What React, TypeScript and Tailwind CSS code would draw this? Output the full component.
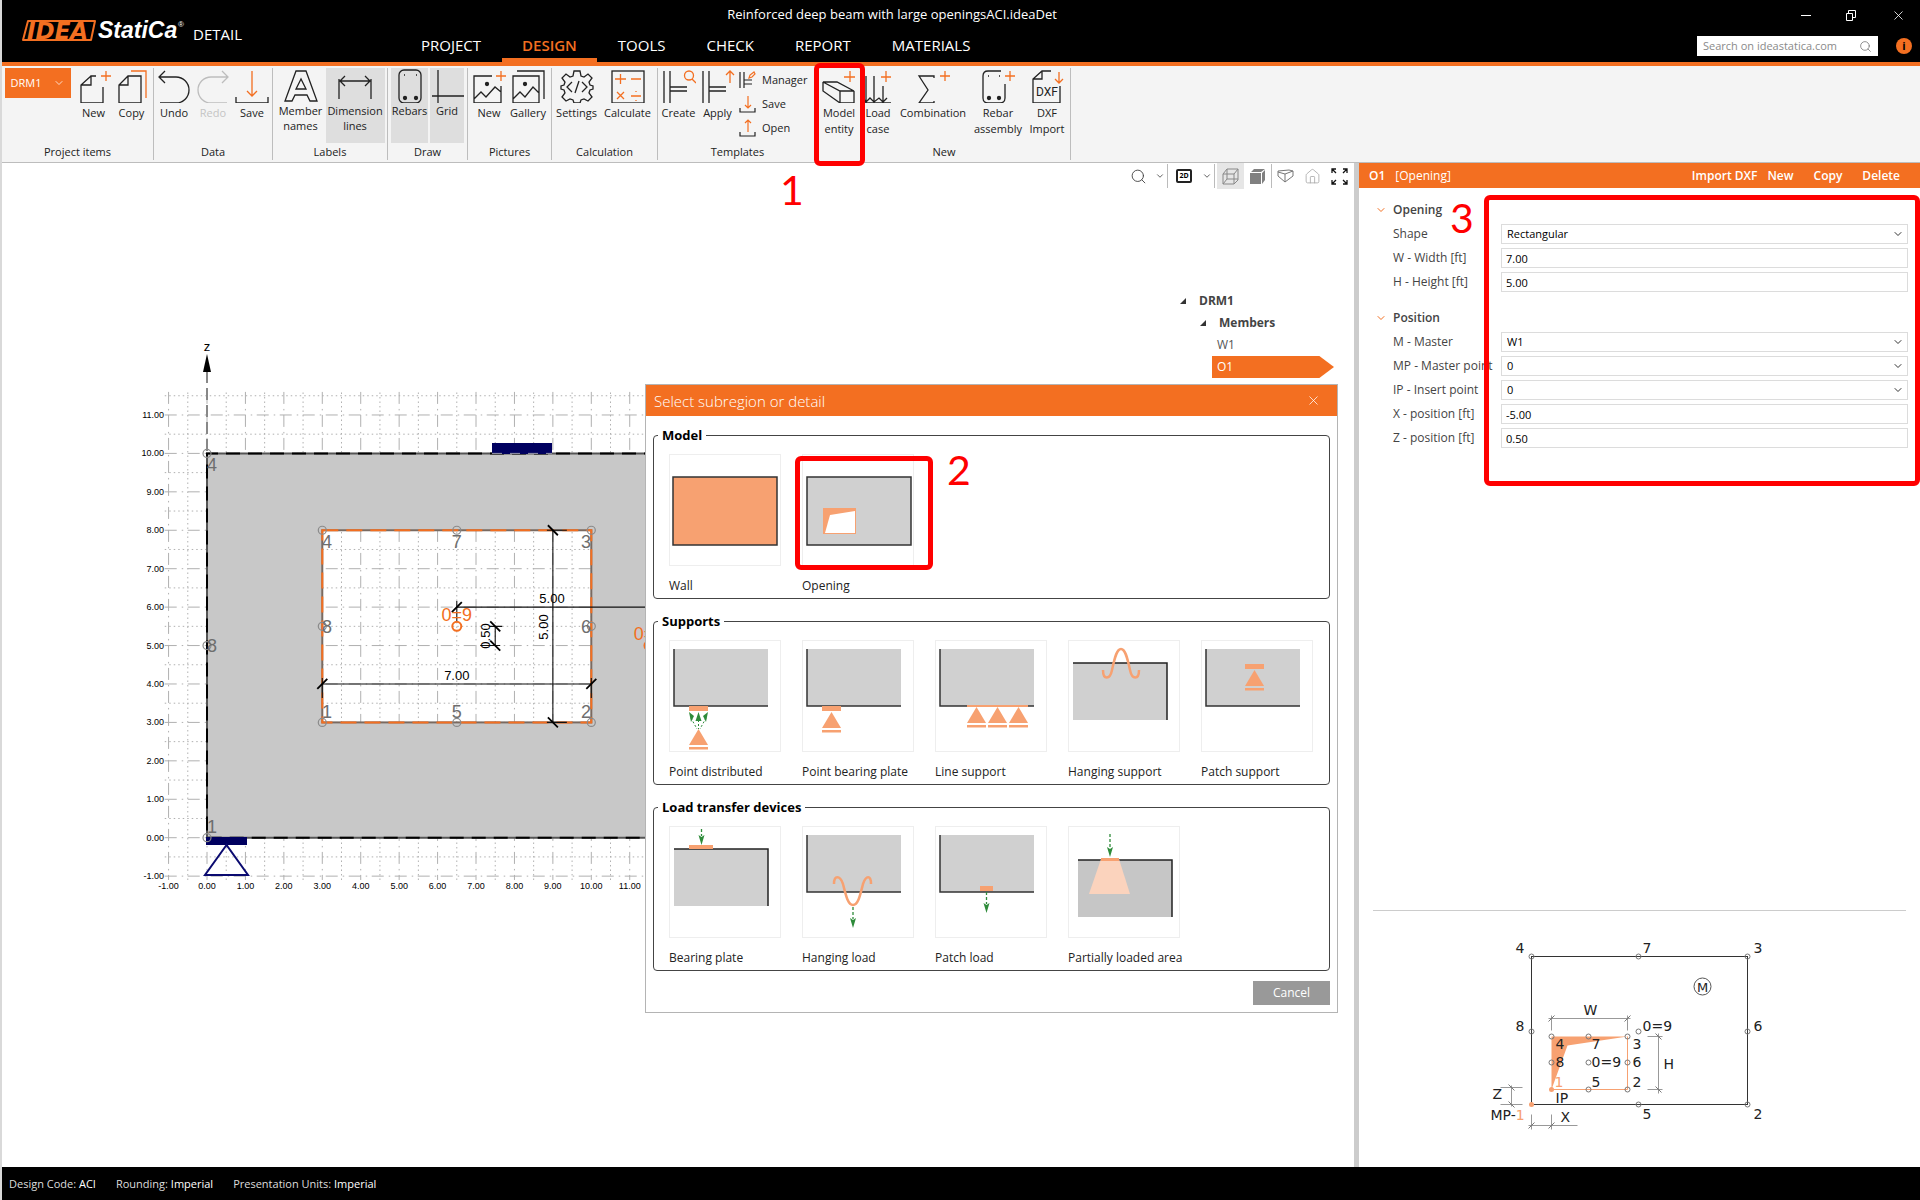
import type { ReactNode } from "react";
import { ChevronDown, Home, Search, X } from "lucide-react";

const ORANGE = "#f36f21";
const PEACH = "#f7a171";
const INK = "#222222";
const GREEN = "#2e8b3a";

/* ---------- ribbon icons ---------- */

const Icon = ({ children, faded }: { children: ReactNode; faded?: boolean }) => (
  <svg width="34" height="34" viewBox="0 0 34 34" fill="none" stroke={faded ? "#bdbdbd" : INK} strokeWidth="1.3">
    {children}
  </svg>
);

const Plus = () => <path d="M24 7h10M29 2v10" stroke={ORANGE} />;

const NewIcon = () => (
  <Icon>
    <path d="M14 7 4 16v18h22V18M19 7h-5v9H4" />
    <Plus />
  </Icon>
);
const CopyIcon = () => (
  <Icon>
    <path d="M13 7h13v27H4V16zM13 7v9H4" />
    <path d="M16 2h15v27" stroke={ORANGE} />
  </Icon>
);
const UndoIcon = () => (
  <Icon>
    <path d="M2 8h17a13 13 0 0 1 0 26H3M8 2 2 8l6 6" />
  </Icon>
);
const RedoIcon = () => (
  <Icon faded>
    <path d="M32 8H15a13 13 0 0 0 0 26h16M26 2l6 6-6 6" />
  </Icon>
);
const SaveIcon = () => (
  <Icon>
    <path d="M17 2v25M12 22l5 5 5-5" stroke={ORANGE} />
    <path d="M1 28v6h32v-6" />
  </Icon>
);
const MemberIcon = () => (
  <Icon>
    <path d="M12 2h10l11 30h-7l-3-6H11l-3 6H1zM17 10l-5 10h10z" />
  </Icon>
);
const DimensionIcon = () => (
  <Icon>
    <path d="M1 10v20M33 10v20M2 12h30M7 7l-5 5 5 5M27 7l5 5-5 5" />
  </Icon>
);
const RebarsIcon = () => (
  <Icon>
    <rect x="6" y="1" width="22" height="33" rx="5" />
    <circle cx="12" cy="29" r="1.5" fill={INK} />
    <circle cx="23" cy="29" r="1.5" fill={INK} />
    <path d="M11 6h1M23 6h1" />
  </Icon>
);
const GridIcon = () => (
  <Icon>
    <path d="M8 1v33M2 27h32" />
  </Icon>
);
const PictureNewIcon = () => (
  <Icon>
    <path d="M20 7H2v27h27V17M2 30l7-7 5 5 9-10 6 5" />
    <circle cx="15" cy="15" r="1.5" fill={INK} />
    <Plus />
  </Icon>
);
const GalleryIcon = () => (
  <Icon>
    <path d="M2 7h26v27H2zM2 30l7-7 5 5 8-10 6 6M6 2h27v28" />
    <circle cx="14" cy="15" r="1.5" fill={INK} />
  </Icon>
);
const SettingsIcon = () => (
  <Icon>
    <path d="M14 2h6l1 5 3 1 4-3 4 4-3 4 1 3 3 1v3l-3 1-1 3 3 4-4 4-4-2-3 1-1 3h-6l-1-3-3-1-4 2-4-4 3-4-1-3-3-1v-3l3-1 1-3-3-4 4-4 4 3 3-1z" />
    <path d="m12 13-5 5 5 5M22 13l5 5-5 5M19 12l-4 12" />
  </Icon>
);
const CalculateIcon = () => (
  <Icon>
    <rect x="1" y="2" width="32" height="32" />
    <path d="M4 10h11M9.5 5v10M20 10h10M6 23l7 7M13 23l-7 7M20 27h10M25 22v1M25 31v1" stroke={ORANGE} />
  </Icon>
);
const Frame = () => <path d="M2 2v32M8 2v32M8 18h17M8 22h17" />;
const CreateIcon = () => (
  <Icon>
    <Frame />
    <path d="M27 2a4 4 0 1 1 0 9 4 4 0 0 1 0-9M30 10l4 4" stroke={ORANGE} />
  </Icon>
);
const ApplyIcon = () => (
  <Icon>
    <Frame />
    <path d="M29 14V2M25 6l4-4 4 4" stroke={ORANGE} />
  </Icon>
);
const ModelIcon = () => (
  <Icon>
    <path d="M1 13h14l17 9H18zM1 13v9l17 12h14V22M18 22v12" />
    <path d="M22 8h11M28 2v11" stroke={ORANGE} />
  </Icon>
);
const LoadIcon = () => (
  <Icon>
    <path d="M5 7v26M13 7v26M22 17v16M2 29l3 4 4-4 4 4 5-4 4 4 4-4M1 34h29" />
    <path d="M20 8h10M25 2v11" stroke={ORANGE} />
  </Icon>
);
const CombinationIcon = () => (
  <Icon>
    <path d="M18 9V7H3l9 14L3 34h15v-2" />
    <Plus />
  </Icon>
);
const RebarNewIcon = () => (
  <Icon>
    <path d="M20 2H7q-5 0-5 5v22q0 5 5 5h12q5 0 5-5V15" />
    <circle cx="8" cy="29" r="1.5" fill={INK} />
    <circle cx="18" cy="29" r="1.5" fill={INK} />
    <path d="M7 7h1M18 7h1" />
    <Plus />
  </Icon>
);
const DxfIcon = () => (
  <Icon>
    <path d="M21 2H12L3 10v24h27V17M12 2v8H3" />
    <path d="M29 3v11M25 10l4 4 4-4" stroke={ORANGE} />
    <text x="6" y="27" fontSize="12" fill={INK} stroke="none" fontFamily="Roboto, sans-serif">
      DXF
    </text>
  </Icon>
);

/* ---------- ribbon ---------- */

type RibbonButtonProps = {
  icon: ReactNode;
  lines: string[];
  className: string;
  active?: boolean;
  disabled?: boolean;
  tight?: boolean;
};

const RibbonButton = ({ icon, lines, className, active, disabled, tight }: RibbonButtonProps) => (
  <button
    disabled={disabled}
    className={`flex h-[75px] shrink-0 flex-col items-center pt-px text-[11px] whitespace-nowrap ${
      active ? "bg-[#dedede]" : ""
    } ${disabled ? "text-[#c4c4c4]" : "text-[#222]"} ${className}`}
  >
    {icon}
    <span className={`flex flex-col items-center ${tight ? "leading-[15px]" : "mt-0.5 leading-4"}`}>
      {lines.map((line) => (
        <span key={line}>{line}</span>
      ))}
    </span>
  </button>
);

const RibbonGroup = ({ title, className, children }: { title: string; className: string; children: ReactNode }) => (
  <section className={`flex shrink-0 flex-col border-r border-[#bdbdbd] ${className}`}>
    <div className="flex flex-1 justify-center">{children}</div>
    <h2 className="text-center text-[11px] leading-4">{title}</h2>
  </section>
);

const SmallButton = ({ icon, label }: { icon: ReactNode; label: string }) => (
  <button className="flex h-6 items-center gap-1.5 text-[11px]">
    <svg width="17" height="18" viewBox="0 0 17 18" fill="none" stroke={INK} strokeWidth="1.2" className="shrink-0">
      {icon}
    </svg>
    {label}
  </button>
);

const Ribbon = () => (
  <div className="flex h-[97px] border-b border-[#bdbdbd] bg-[#f4f4f4] pt-0.5 pb-0.5 text-[#222]">
    <RibbonGroup title="Project items" className="w-[152px]">
      <button className="mr-1 flex h-[30px] w-[66px] items-center justify-between bg-[#f36f21] px-1.5 text-[11px] text-white">
        DRM1 <ChevronDown size={12} strokeWidth={1.5} />
      </button>
      <RibbonButton icon={<NewIcon />} lines={["New"]} className="w-[38px]" />
      <RibbonButton icon={<CopyIcon />} lines={["Copy"]} className="w-[38px]" />
    </RibbonGroup>
    <RibbonGroup title="Data" className="w-[119px]">
      <RibbonButton icon={<UndoIcon />} lines={["Undo"]} className="w-[39px]" />
      <RibbonButton icon={<RedoIcon />} lines={["Redo"]} className="w-[39px]" disabled />
      <RibbonButton icon={<SaveIcon />} lines={["Save"]} className="w-[39px]" />
    </RibbonGroup>
    <RibbonGroup title="Labels" className="w-[115px]">
      <RibbonButton icon={<MemberIcon />} lines={["Member", "names"]} className="w-[50px]" tight />
      <RibbonButton icon={<DimensionIcon />} lines={["Dimension", "lines"]} className="w-[59px]" active tight />
    </RibbonGroup>
    <RibbonGroup title="Draw" className="w-[80px]">
      <RibbonButton icon={<RebarsIcon />} lines={["Rebars"]} className="mr-0.5 w-[37px]" active tight />
      <RibbonButton icon={<GridIcon />} lines={["Grid"]} className="w-[34px]" active tight />
    </RibbonGroup>
    <RibbonGroup title="Pictures" className="w-[84px]">
      <RibbonButton icon={<PictureNewIcon />} lines={["New"]} className="w-[39px]" />
      <RibbonButton icon={<GalleryIcon />} lines={["Gallery"]} className="mr-0.5 w-[39px]" />
    </RibbonGroup>
    <RibbonGroup title="Calculation" className="w-[106px]">
      <RibbonButton icon={<SettingsIcon />} lines={["Settings"]} className="w-[48px]" />
      <RibbonButton icon={<CalculateIcon />} lines={["Calculate"]} className="mr-0.5 w-[54px]" />
    </RibbonGroup>
    <RibbonGroup title="Templates" className="w-[160px]">
      <RibbonButton icon={<CreateIcon />} lines={["Create"]} className="w-[39px]" />
      <RibbonButton icon={<ApplyIcon />} lines={["Apply"]} className="w-[39px]" />
      <div className="flex w-[79px] flex-col pl-0.5">
        <SmallButton
          label="Manager"
          icon={
            <>
              <path d="M1 1v16M5 1v16M5 9h8M5 13h8" />
              <path d="m10 7 1-3 4-3 1 2-3 3z" stroke={ORANGE} />
            </>
          }
        />
        <SmallButton
          label="Save"
          icon={
            <>
              <path d="M9 1v12M6 10l3 3 3-3" stroke={ORANGE} />
              <path d="M1 13v4h15v-4" />
            </>
          }
        />
        <SmallButton
          label="Open"
          icon={
            <>
              <path d="M9 13V1M6 4l3-3 3 3" stroke={ORANGE} />
              <path d="M1 13v4h15v-4" />
            </>
          }
        />
      </div>
    </RibbonGroup>
    <RibbonGroup title="New" className="w-[253px]">
      <RibbonButton icon={<ModelIcon />} lines={["Model", "entity"]} className="w-[40px]" />
      <RibbonButton icon={<LoadIcon />} lines={["Load", "case"]} className="w-[38px]" />
      <RibbonButton icon={<CombinationIcon />} lines={["Combination"]} className="w-[72px]" />
      <RibbonButton icon={<RebarNewIcon />} lines={["Rebar", "assembly"]} className="w-[58px]" />
      <RibbonButton icon={<DxfIcon />} lines={["DXF", "Import"]} className="mr-0.5 w-[40px]" />
    </RibbonGroup>
  </div>
);

/* ---------- header ---------- */

const Logo = () => (
  <svg width="164" height="26" viewBox="0 0 164 26">
    <path d="M7 3h67l-4 19H2z" fill="none" stroke={ORANGE} strokeWidth="2" strokeLinejoin="round" />
    <text
      x="6"
      y="21"
      fontSize="23"
      fontWeight="700"
      fontStyle="italic"
      fill={ORANGE}
      fontFamily="DejaVu Sans, sans-serif"
    >
      IDEA
    </text>
    <text
      x="77"
      y="20"
      fontSize="23"
      fontWeight="700"
      fontStyle="italic"
      fill="#fff"
      fontFamily="Liberation Sans, sans-serif"
    >
      StatiCa
    </text>
    <text x="157" y="9" fontSize="8" fill="#fff" fontFamily="Liberation Sans, sans-serif">
      ®
    </text>
  </svg>
);

const tabs = ["PROJECT", "DESIGN", "TOOLS", "CHECK", "REPORT", "MATERIALS"];

const Header = () => (
  <header className="flex h-[66px] border-b-4 border-[#f36f21] bg-black text-white">
    <div className="flex w-[399px] shrink-0 items-center gap-2 pl-[19px]">
      <Logo />
      <span className="pt-1.5 text-[15px]">DETAIL</span>
    </div>
    <div className="flex flex-1 flex-col">
      <h1 className="h-7 text-center text-[13px] leading-7">Reinforced deep beam with large openingsACI.ideaDet</h1>
      <nav className="flex gap-px">
        {tabs.map((tab) => (
          <button
            key={tab}
            className={`h-[34px] border-b-4 px-5 pt-1 text-[15px] leading-6 ${
              tab === "DESIGN" ? "border-[#f36f21] font-semibold text-[#f36f21]" : "border-transparent"
            }`}
          >
            {tab}
          </button>
        ))}
      </nav>
    </div>
    <div className="flex w-[537px] shrink-0 flex-col items-end">
      <div className="flex h-[30px] items-center gap-[35px] pr-3.5">
        <button aria-label="Minimize" className="h-px w-2.5 bg-white" />
        <button aria-label="Restore">
          <svg width="10" height="11" viewBox="0 0 10 11" fill="none" stroke="#fff">
            <path d="M.5 3.5h6v7h-6zM2.5 3V.5h7v7H7" />
          </svg>
        </button>
        <button aria-label="Close">
          <X size={15} strokeWidth={1.3} />
        </button>
      </div>
      <div className="mt-1.5 flex items-center gap-[18px] pr-2">
        <label className="flex h-5 w-[181px] items-center bg-white px-1.5">
          <input
            aria-label="Search"
            placeholder="Search on ideastatica.com"
            className="w-full min-w-0 text-[11px] text-black outline-none placeholder:text-[#8a8a8a]"
          />
          <Search size={13} className="shrink-0 text-[#777]" strokeWidth={1.5} />
        </label>
        <button aria-label="Info" className="size-4 rounded-full bg-[#f36f21] text-[11px] leading-4 font-bold text-black">
          i
        </button>
      </div>
    </div>
  </header>
);

/* ---------- beam drawing ---------- */

const UNIT = 38.43;
const gx = (x: number) => 205 + x * UNIT;
const gz = (z: number) => 674.7 - z * UNIT;

const range = (from: number, to: number) => Array.from({ length: to - from + 1 }, (_, i) => from + i);

const Node = ({ x, z, color = "#8a8a8a", r = 4 }: { x: number; z: number; color?: string; r?: number }) => (
  <circle cx={gx(x)} cy={gz(z)} r={r} fill="none" stroke={color} strokeWidth={r > 4 ? 2 : 1.2} />
);

const Tick = ({ x, z, flip }: { x: number; z: number; flip?: boolean }) => (
  <path
    d={flip ? "M-5-5 5 5" : "M-5 5 5-5"}
    transform={`translate(${gx(x)} ${gz(z)})`}
    stroke="#000"
    strokeWidth="1.8"
  />
);

const BeamDrawing = () => (
  <svg className="absolute inset-0 h-full w-full" fontFamily="Liberation Sans, sans-serif">
    <g stroke="#b0b0b0">
      {range(-1, 17).map((x) => (
        <path key={`v${x}`} d={`M${gx(x)} ${gz(11.6)}V${gz(-1.1)}`} strokeDasharray="12 5 1.5 4.5" />
      ))}
      {range(-1, 11).map((z) => (
        <path key={`h${z}`} d={`M${gx(-1.1)} ${gz(z)}H700`} strokeDasharray="12 5 1.5 4.5" />
      ))}
      {range(-1, 16).map((x) => (
        <path key={`dv${x}`} d={`M${gx(x + 0.5)} ${gz(-1.1)}V${gz(11.6)}`} strokeDasharray="1.5 3" />
      ))}
      {range(-1, 11).map((z) => (
        <path key={`dh${z}`} d={`M${gx(-1.1)} ${gz(z + 0.5)}H700`} strokeDasharray="1.5 3" />
      ))}
    </g>
    <g fontSize="9" fill="#000">
      {range(-1, 11).map((z) => (
        <text key={z} x="162" y={gz(z) + 3} textAnchor="end">
          {z.toFixed(2)}
        </text>
      ))}
      {range(-1, 12).map((x) => (
        <text key={x} x={gx(x)} y="726" textAnchor="middle">
          {x.toFixed(2)}
        </text>
      ))}
    </g>

    {/* z axis */}
    <path d={`M${gx(0)} 208V290`} stroke="#888" strokeWidth="2" strokeDasharray="12 5" />
    <path d="M205 191l4 18h-8z" />
    <text x="205" y="188" fontSize="13" textAnchor="middle">
      z
    </text>

    {/* wall with the opening cut out */}
    <path
      d={`M205 ${gz(10)}H700V${gz(0)}H205zM${gx(3)} ${gz(8)}V${gz(3)}H${gx(10)}V${gz(8)}z`}
      fill="#c8c8c8"
      fillRule="evenodd"
    />
    <path d={`M700 ${gz(10)}H205V${gz(0)}H700`} fill="none" stroke="#555" strokeWidth="2" />
    <path d={`M700 ${gz(10)}H205V${gz(0)}H700`} fill="none" stroke="#000" strokeWidth="2" strokeDasharray="14 8" />
    <rect x="490" y="280" width="60" height="11" fill="#00005f" />
    <path d={`M490 ${gz(10)}h60`} stroke="#99a" strokeDasharray="10 8" />
    <rect x="204" y="674" width="41" height="8" fill="#00005f" />
    <path d="M224.5 682 203 712h43z" fill="none" stroke="#0a0a70" strokeWidth="2" />

    <rect x={gx(3)} y={gz(8)} width={7 * UNIT} height={5 * UNIT} fill="none" stroke="#7a6a60" strokeWidth="2" />
    <rect
      x={gx(3)}
      y={gz(8)}
      width={7 * UNIT}
      height={5 * UNIT}
      fill="none"
      stroke={ORANGE}
      strokeWidth="2"
      strokeDasharray="16 8"
    />

    {/* dimensions */}
    <g stroke="#111" strokeWidth="1.1">
      <path d={`M${gx(6.5)} ${gz(6)}H700M${gx(6.5)} ${gz(6) - 6}v20`} />
      <path d={`M${gx(3)} ${gz(4)}H${gx(10)}M${gx(3)} ${gz(4) - 6}v20M${gx(10)} ${gz(4) - 6}v20`} />
      <path d={`M${gx(9)} ${gz(8)}V${gz(3)}M${gx(9) - 6} ${gz(8)}h20M${gx(9) - 6} ${gz(3)}h20`} />
      <path d={`M${gx(7.5)} ${gz(5.5)}V${gz(5)}M${gx(7.5) - 6} ${gz(5.5)}h13M${gx(7.5) - 15} ${gz(5)}h20`} />
    </g>
    <Tick x={6.5} z={6} />
    <Tick x={3} z={4} />
    <Tick x={10} z={4} />
    <Tick x={9} z={8} flip />
    <Tick x={9} z={3} flip />
    <Tick x={7.5} z={5.5} flip />
    <Tick x={7.5} z={5} flip />
    <g fontSize="13" textAnchor="middle">
      <text x="550" y="440">
        5.00
      </text>
      <text x={gx(6.5)} y="517">
        7.00
      </text>
      <text transform="translate(546 464) rotate(-90)">5.00</text>
      <text transform="translate(488 473) rotate(-90)">0.50</text>
    </g>

    {/* node numbers */}
    {[
      [0, 10],
      [0, 5],
      [0, 0],
      [3, 8],
      [6.5, 8],
      [10, 8],
      [3, 5.5],
      [10, 5.5],
      [3, 3],
      [6.5, 3],
      [10, 3],
    ].map(([x, z]) => (
      <Node key={`${x}-${z}`} x={x} z={z} />
    ))}
    <g fontSize="18" fill="#6e6e6e">
      <text x="205" y="308">
        4
      </text>
      <text x="205" y="489">
        8
      </text>
      <text x="205" y="670">
        1
      </text>
      <text x="320" y="385">
        4
      </text>
      <text x={gx(6.5)} y="385" textAnchor="middle">
        7
      </text>
      <text x="589" y="385" textAnchor="end">
        3
      </text>
      <text x="320" y="470">
        8
      </text>
      <text x="589" y="470" textAnchor="end">
        6
      </text>
      <text x="320" y="555">
        1
      </text>
      <text x={gx(6.5)} y="555" textAnchor="middle">
        5
      </text>
      <text x="589" y="555" textAnchor="end">
        2
      </text>
      <g fill={ORANGE} textAnchor="middle">
        <text x={gx(6.5)} y="458">
          0=9
        </text>
        <text x={gx(11.5)} y="477">
          0=9
        </text>
      </g>
    </g>
    <Node x={6.5} z={5.5} color={ORANGE} r={4.5} />
    <Node x={11.5} z={5} color={ORANGE} r={4.5} />
  </svg>
);

const ViewToolbar = () => (
  <div className="relative flex h-[26px] items-center justify-end pr-px text-[#444]">
    <button aria-label="Zoom" className="px-2">
      <Search size={17} strokeWidth={1.3} />
    </button>
    <button aria-label="Zoom options" className="mr-0.5">
      <ChevronDown size={10} />
    </button>
    <span className="h-6 w-px bg-[#bbb]" />
    <button className="mr-1.5 ml-2 h-3.5 w-4 rounded-xs border-2 border-[#222] text-[7px] leading-[10px] font-bold text-black">
      2D
    </button>
    <button aria-label="View options" className="mr-0.5 ml-1">
      <ChevronDown size={10} />
    </button>
    <span className="h-6 w-px bg-[#bbb]" />
    <button aria-label="Wireframe" className="ml-0.5 flex h-[26px] w-[27px] items-center justify-center bg-[#e6e6e6]">
      <svg width="17" height="17" viewBox="0 0 17 17" fill="none" stroke="#888">
        <path d="M1 6 5 1h11l-4 5zM1 6v10h11V6M12 16l4-4V1M5 1v10h11M5 11l-4 5" />
      </svg>
    </button>
    <button aria-label="Solid" className="flex h-[26px] w-[27px] items-center justify-center">
      <svg width="17" height="17" viewBox="0 0 17 17" fill="#808080">
        <path d="M1 5h11v11H1zM2 4l3-3h11l-4 3zM13 5l3-3v10l-3 4z" />
      </svg>
    </button>
    <span className="h-6 w-px bg-[#bbb]" />
    <button aria-label="Perspective" className="flex w-[27px] justify-center">
      <svg width="17" height="14" viewBox="0 0 17 14" fill="none" stroke="#777">
        <path d="m1 2 11-1 4 1v5l-8 6V5L1 3zM8 5l8-3M1 3v4l7 6" />
      </svg>
    </button>
    <button aria-label="Home view" className="flex w-[27px] justify-center">
      <Home size={17} strokeWidth={1.2} className="text-[#aaa]" />
    </button>
    <button aria-label="Fit to window" className="flex w-[27px] justify-center">
      <svg width="17" height="17" viewBox="0 0 17 17" fill="none" stroke="#111" strokeWidth="1.3">
        <path d="M1 5V1h4M1 1l4 4M12 1h4v4M16 1l-4 4M1 12v4h4M1 16l4-4M12 16h4v-4M16 16l-4-4" />
      </svg>
    </button>
  </div>
);

const Caret = () => (
  <svg width="6" height="6" viewBox="0 0 6 6" fill="#333">
    <path d="M6 0v6H0z" />
  </svg>
);

const Tree = () => (
  <ul className="absolute top-[127px] right-5 w-[154px] text-xs leading-[22px] text-[#555]">
    <li className="flex items-center gap-[13px] font-bold text-[#444]">
      <Caret /> DRM1
    </li>
    <li className="flex items-center gap-[13px] pl-5 font-bold text-[#444]">
      <Caret /> Members
    </li>
    <li className="pl-[37px]">W1</li>
    <li className="pl-8">
      <button className="block w-full bg-[#f36f21] pl-[5px] text-left text-white [clip-path:polygon(0_0,88%_0,100%_50%,88%_100%,0_100%)]">
        O1
      </button>
    </li>
    <li className="pl-[37px]">O2</li>
  </ul>
);

/* ---------- dialog ---------- */

const Triangle = ({ x, y, h = 16 }: { x: number; y: number; h?: number }) => (
  <g fill={PEACH}>
    <path d={`M${x} ${y}l9.5 ${h}h-19z`} />
    <rect x={x - 9.5} y={y + h + 2} width="19" height="2.5" />
  </g>
);

const LoadArrow = ({ x, y, len }: { x: number; y: number; len: number }) => (
  <g>
    <path d={`M${x} ${y}v${len - 9}`} stroke={GREEN} strokeWidth="1.3" strokeDasharray="3 2" />
    <path d={`M${x - 3} ${y + len - 10}l3 2 3-2-3 10z`} fill={GREEN} />
  </g>
);

/* concrete block with its left and bottom edges drawn */
const BlockLB = () => (
  <g>
    <rect x="4" y="9" width="94" height="57" fill="#d0d0d0" />
    <path d="M4 9v57h94" fill="none" stroke="#333" strokeWidth="1.5" />
  </g>
);

/* same block with its top and right edges drawn */
const BlockTR = ({ x = 4, y = 23, fill = "#d0d0d0" }: { x?: number; y?: number; fill?: string }) => (
  <g>
    <rect x={x} y={y} width="94" height="57" fill={fill} />
    <path d={`M${x} ${y}h94v57`} fill="none" stroke="#222" strokeWidth="1.5" />
  </g>
);

const groups: { title: string; items: { label: string; art: ReactNode }[] }[] = [
  {
    title: "Model",
    items: [
      { label: "Wall", art: <rect x="3" y="23" width="104" height="68" fill={PEACH} stroke="#333" strokeWidth="1.5" /> },
      {
        label: "Opening",
        art: (
          <>
            <rect x="4" y="23" width="104" height="68" fill="#d0d0d0" stroke="#333" strokeWidth="1.5" />
            <rect x="20" y="54" width="33" height="26" fill={PEACH} />
            <path d="m27 61 25-4v22H22z" fill="#fff" />
          </>
        ),
      },
    ],
  },
  {
    title: "Supports",
    items: [
      {
        label: "Point distributed",
        art: (
          <>
            <BlockLB />
            <rect x="19" y="66" width="19" height="5" fill={PEACH} />
            <path d="m19 72 5 4-3 6zM38 72l-5 4 3 6zM28.5 72l3 9h-6z" fill={GREEN} />
            <path d="m21 78 6 11M36 78l-6 11M28.5 80v9" stroke={GREEN} strokeDasharray="2 2" />
            <Triangle x={28.5} y={89} />
          </>
        ),
      },
      {
        label: "Point bearing plate",
        art: (
          <>
            <BlockLB />
            <rect x="19" y="66" width="19" height="5" fill={PEACH} />
            <Triangle x={28.5} y={72} />
          </>
        ),
      },
      {
        label: "Line support",
        art: (
          <>
            <BlockLB />
            <rect x="31" y="65" width="61" height="2" fill={PEACH} />
            <Triangle x={40.5} y={67} />
            <Triangle x={61.5} y={67} />
            <Triangle x={82.5} y={67} />
          </>
        ),
      },
      {
        label: "Hanging support",
        art: (
          <>
            <BlockTR />
            <path
              d="M34 30c0 10 7 10 9 0 3-14 5-21 9-21s6 7 9 21c2 10 9 10 9 0"
              fill="none"
              stroke={PEACH}
              strokeWidth="2.5"
            />
          </>
        ),
      },
      {
        label: "Patch support",
        art: (
          <>
            <BlockLB />
            <rect x="43" y="24" width="19" height="5" fill={PEACH} />
            <Triangle x={52.5} y={30} />
          </>
        ),
      },
    ],
  },
  {
    title: "Load transfer devices",
    items: [
      {
        label: "Bearing plate",
        art: (
          <>
            <BlockTR />
            <rect x="19" y="19" width="24" height="4" fill={PEACH} />
            <LoadArrow x={31.5} y={3} len={16} />
          </>
        ),
      },
      {
        label: "Hanging load",
        art: (
          <>
            <BlockLB />
            <path
              d="M31 58c0-9 6-9 9 0 3 12 5 21 10 21s7-9 10-21c3-9 8-9 8 0"
              fill="none"
              stroke={PEACH}
              strokeWidth="2.5"
            />
            <LoadArrow x={50} y={81} len={21} />
          </>
        ),
      },
      {
        label: "Patch load",
        art: (
          <>
            <BlockLB />
            <rect x="44" y="60" width="13" height="5" fill={PEACH} />
            <LoadArrow x={50.5} y={66} len={21} />
          </>
        ),
      },
      {
        label: "Partially loaded area",
        art: (
          <>
            <BlockTR x={9} y={34} fill="#c6c6c6" />
            <path d="M32 33h18l11 35H20z" fill="#fbd3bd" />
            <rect x="32" y="32" width="18" height="3" fill={PEACH} />
            <LoadArrow x={41} y={8} len={23} />
          </>
        ),
      },
    ],
  },
];

const SelectDialog = () => (
  <div
    role="dialog"
    aria-labelledby="dialog-title"
    className="absolute top-[221px] left-[643px] w-[693px] border border-[#b4b4b4] bg-white text-xs text-[#222]"
  >
    <div className="flex h-[31px] items-center justify-between bg-[#f36f21] pr-4 pl-2 text-white">
      <h2 id="dialog-title" className="text-[15px] font-light">
        Select subregion or detail
      </h2>
      <button aria-label="Close dialog">
        <X size={15} strokeWidth={1.2} />
      </button>
    </div>
    <div className="flex flex-col gap-[13px] px-[7px] pt-2.5">
      {groups.map((group) => (
        <fieldset key={group.title} className="rounded border border-[#444] px-1 pb-[3px]">
          <legend className="px-1 text-[13px] leading-[18px] font-bold text-black">{group.title}</legend>
          <div className="flex gap-[21px] pt-2.5 pl-[11px]">
            {group.items.map((item) => (
              <button key={item.label} className="flex w-28 flex-col gap-[11px] text-left text-xs leading-[18px]">
                <svg
                  width="112"
                  height="112"
                  viewBox="-1 0 112 112"
                  className="bg-white outline -outline-offset-1 outline-[#eee]"
                >
                  {item.art}
                </svg>
                <span className="whitespace-nowrap">{item.label}</span>
              </button>
            ))}
          </div>
        </fieldset>
      ))}
    </div>
    <div className="flex justify-end px-[7px] pt-2.5 pb-[7px]">
      <button className="h-6 w-[77px] bg-[#999] text-xs text-white">Cancel</button>
    </div>
  </div>
);

/* ---------- property panel ---------- */

type Field = { id: string; label: string; value: string; select?: boolean };

const sections: { title: string; fields: Field[] }[] = [
  {
    title: "Opening",
    fields: [
      { id: "shape", label: "Shape", value: "Rectangular", select: true },
      { id: "width", label: "W - Width [ft]", value: "7.00" },
      { id: "height", label: "H - Height [ft]", value: "5.00" },
    ],
  },
  {
    title: "Position",
    fields: [
      { id: "master", label: "M - Master", value: "W1", select: true },
      { id: "master-point", label: "MP - Master point", value: "0", select: true },
      { id: "insert-point", label: "IP - Insert point", value: "0", select: true },
      { id: "x-position", label: "X - position [ft]", value: "-5.00" },
      { id: "z-position", label: "Z - position [ft]", value: "0.50" },
    ],
  },
];

const FieldRow = ({ field }: { field: Field }) => (
  <div className="flex h-6 items-center pl-[34px]">
    <label htmlFor={field.id} className="w-[108px] shrink-0 whitespace-nowrap">
      {field.label}
    </label>
    {field.select ? (
      <div className="relative flex-1">
        <select
          id={field.id}
          defaultValue={field.value}
          className="block h-5 w-full appearance-none border border-[#dcdcdc] bg-white px-[5px] text-[11px] text-black"
        >
          <option>{field.value}</option>
        </select>
        <ChevronDown size={12} className="pointer-events-none absolute top-1 right-1 text-[#333]" strokeWidth={2} />
      </div>
    ) : (
      <input
        id={field.id}
        defaultValue={field.value}
        className="h-5 min-w-0 flex-1 border border-[#dcdcdc] px-1 text-[11px] text-black"
      />
    )}
  </div>
);

const schemePoints = [
  [71, 45],
  [178, 45],
  [287, 45],
  [71, 120],
  [178, 120],
  [287, 120],
  [178, 193],
  [287, 193],
  [91, 125],
  [128, 125],
  [167, 125],
  [91, 151],
  [128, 151],
  [167, 151],
  [128, 178],
  [167, 178],
];

const schemeLabels: [number, number, string][] = [
  [55, 41, "4"],
  [182, 41, "7"],
  [293, 41, "3"],
  [55, 119, "8"],
  [182, 119, "0=9"],
  [293, 119, "6"],
  [182, 207, "5"],
  [293, 207, "2"],
  [123, 103, "W"],
  [95, 137, "4"],
  [131, 137, "7"],
  [172, 137, "3"],
  [95, 155, "8"],
  [131, 155, "0=9"],
  [172, 155, "6"],
  [203, 157, "H"],
  [131, 175, "5"],
  [172, 175, "2"],
  [95, 191, "IP"],
  [32, 187, "Z"],
  [100, 210, "X"],
];

const Scheme = () => (
  <svg
    width="340"
    height="225"
    viewBox="-0.5 -0.5 340 225"
    fontFamily="DejaVu Sans, sans-serif"
    fontSize="14"
    fill="#222"
  >
    <rect x="71" y="45" width="216" height="148" fill="none" stroke="#333" />
    <path d="M91 125h76l-60 9-16 44z" fill={PEACH} />
    <path d="M91 178h76v-53" fill="none" stroke={PEACH} />
    <path
      d="M91 119v-15M167 119v-15M88 107h82M187 125h15M187 178h15M198 122v60M40 176h22M40 193h22M51 174v21M71 203v15M91 203v15M68 214h49"
      stroke="#999"
    />
    <path
      d="m88 110 6-6M164 110l6-6M195 122l6 6M195 175l6 6M48 173l6 6M48 190l6 6M68 217l6-6M88 217l6-6"
      stroke="#777"
    />
    <g fill="none" stroke="#777">
      {schemePoints.map(([x, y]) => (
        <circle key={`${x}-${y}`} cx={x} cy={y} r="2.5" />
      ))}
    </g>
    <circle cx="91" cy="178" r="2.5" fill={PEACH} />
    <circle cx="71" cy="193" r="2.5" fill={PEACH} />
    <circle cx="242" cy="75" r="8.5" fill="none" stroke="#555" />
    <text x="242" y="80" textAnchor="middle" fontSize="13">
      M
    </text>
    {schemeLabels.map(([x, y, label]) => (
      <text key={`${x}-${y}`} x={x} y={y}>
        {label}
      </text>
    ))}
    <text x="94" y="175" fill={PEACH}>
      1
    </text>
    <text x="30" y="208">
      MP-<tspan fill={PEACH}>1</tspan>
    </text>
  </svg>
);

const PropertyPanel = () => (
  <aside className="relative flex w-[566px] shrink-0 flex-col border-l-[5px] border-[#ccc] text-xs text-[#444]">
    <div className="flex h-[25px] items-center bg-[#f36f21] pr-5 pl-2.5 font-semibold text-white">
      <span>O1</span>
      <span className="ml-2.5 font-normal">[Opening]</span>
      <button className="ml-auto">Import DXF</button>
      <button className="ml-2.5">New</button>
      <button className="ml-5">Copy</button>
      <button className="ml-5">Delete</button>
    </div>
    <div className="flex flex-col gap-3 pt-2.5 pr-3">
      {sections.map((section) => (
        <section key={section.title}>
          <h3 className="flex h-6 items-center gap-1.5 pl-4 font-semibold">
            <ChevronDown size={12} color={ORANGE} strokeWidth={2} />
            {section.title}
          </h3>
          {section.fields.map((field) => (
            <FieldRow key={field.id} field={field} />
          ))}
        </section>
      ))}
    </div>
    <div className="mx-3.5 mt-auto flex h-[257px] border-t border-[#ccc] pl-[87px]">
      <Scheme />
    </div>
    <Callout box="top-8 right-0 h-[291px] w-[436px]" />
    <CalloutNumber value="3" place="top-[34px] left-[91px]" />
  </aside>
);

/* ---------- callouts ---------- */

const Callout = ({ box }: { box: string }) => (
  <div className={`pointer-events-none absolute rounded-md border-[5px] border-[#ff0000] ${box}`} />
);

const CalloutNumber = ({ value, place }: { value: string; place: string }) => (
  <span className={`pointer-events-none absolute font-['Lato',sans-serif] text-[41px] leading-[41px] text-[#ff0000] ${place}`}>
    {value}
  </span>
);

const status = [
  ["Design Code:", "ACI"],
  ["Rounding:", "Imperial"],
  ["Presentation Units:", "Imperial"],
];

const App = () => (
  <div className="relative flex min-h-screen flex-col border-l-2 border-[#d9d9d9] bg-white font-['Open_Sans','Noto_Sans',sans-serif]">
    <Header />
    <Ribbon />
    <main className="flex flex-1">
      <div className="relative flex-1 overflow-hidden">
        <BeamDrawing />
        <ViewToolbar />
        <Tree />
        <SelectDialog />
        <Callout box="top-[293px] left-[793px] h-[114px] w-[138px]" />
        <CalloutNumber value="2" place="top-[286px] left-[945px]" />
        <CalloutNumber value="1" place="top-[6px] left-[778px]" />
      </div>
      <PropertyPanel />
    </main>
    <footer className="flex h-[33px] items-center gap-5 bg-black pt-px pl-[7px] text-[11px] text-[#ddd]">
      {status.map(([name, value]) => (
        <span key={name}>
          {name} <span className="font-medium text-white">{value}</span>
        </span>
      ))}
    </footer>
    <Callout box="top-[63px] left-[812px] h-[103px] w-[51px]" />
  </div>
);

export default App;
